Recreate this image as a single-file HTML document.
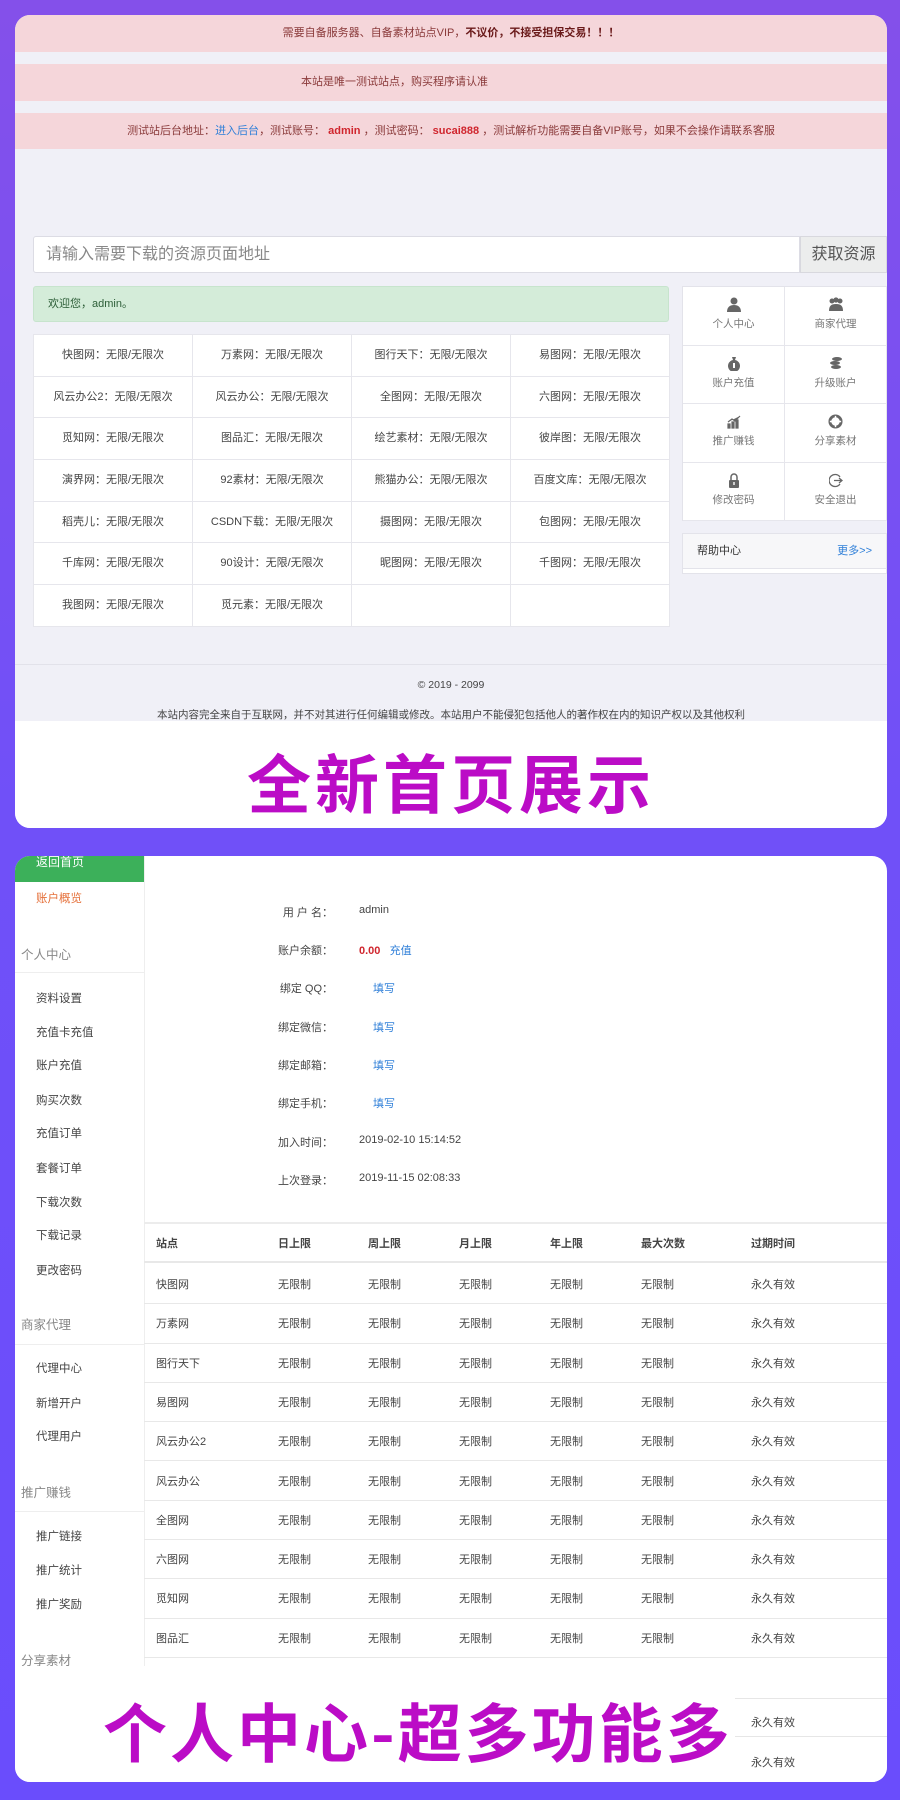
<!DOCTYPE html>
<html><head><meta charset="utf-8"><style>
*{margin:0;padding:0;box-sizing:border-box}
body{width:900px;height:1800px;overflow:hidden;background:linear-gradient(180deg,#8450ea 0%,#7050f8 45%,#6a4dfc 100%);font-family:"Liberation Sans","Noto Sans CJK SC",sans-serif;color:#333;position:relative}
.a{position:absolute}
.card{position:absolute;left:15px;width:872px;border-radius:15px;overflow:hidden;background:#fff}
.alert{position:absolute;left:0;width:872px;background:#f5d6da;color:#8a3a3a;font-size:11px;text-align:center}
.grid{position:absolute;left:18px;top:319px;width:637px;display:grid;grid-template-columns:repeat(4,159px);border-top:1px solid #e6e6ec;border-left:1px solid #e6e6ec;background:#fff}
.grid div{height:41.7px;line-height:41.7px;text-align:center;font-size:11px;border-right:1px solid #e6e6ec;border-bottom:1px solid #e6e6ec;color:#444;white-space:nowrap}
.rp{position:absolute;left:667px;top:271px;width:206px;display:grid;grid-template-columns:102px 102px;background:#fff;border-left:1px solid #e3e3ea;border-top:1px solid #e3e3ea}
.rp div{height:58.5px;border-right:1px solid #e6e6ec;border-bottom:1px solid #e6e6ec;text-align:center;font-size:10.5px;color:#777;padding-top:10px}
.rp svg{display:block;margin:0 auto 4px}
.side div{position:absolute;left:21px;font-size:11.5px;color:#444}
.side .h{left:6px;font-size:12.5px;color:#888}
.side .ln{left:0;width:129px;height:1px;background:#eee}
.lb{position:absolute;width:180px;left:138px;text-align:right;font-size:11px;color:#444}
.vl{position:absolute;left:344px;font-size:11px;color:#444}
.tr{position:absolute;left:129px;width:743px;height:39.3px;border-bottom:1px solid #e8e8e8;font-size:11px;color:#444}
.tr span{position:absolute;top:11px}
.big{position:absolute;font-weight:bold;color:#bb0cc6;font-family:"Noto Sans CJK SC","WenQuanYi Zen Hei",sans-serif;white-space:nowrap}
</style></head><body>
<div class="card" style="top:15px;height:813px;background:#f0f0f7">
 <div class="alert" style="top:0;height:37px;line-height:37px">需要自备服务器、自备素材站点VIP，<b style="color:#6a1a1a">不议价，不接受担保交易！！！</b></div>
 <div class="alert" style="top:49px;height:37px;line-height:37px;text-align:left;padding-left:286px">本站是唯一测试站点，购买程序请认准</div>
 <div class="alert" style="top:98px;height:36px;line-height:36px">测试站后台地址：<span style="color:#2f7fd8">进入后台</span>，测试账号： <b style="color:#d0262e">admin</b> ，测试密码： <b style="color:#d0262e">sucai888</b> ，测试解析功能需要自备VIP账号，如果不会操作请联系客服</div>
 <div class="a" style="left:18px;top:221px;width:767px;height:37px;background:#fff;border:1px solid #dcdce4;border-radius:3px 0 0 3px;font-size:16px;color:#888;line-height:35px;padding-left:12px">请输入需要下载的资源页面地址</div>
 <div class="a" style="left:785px;top:221px;width:87px;height:37px;background:#eceded;border:1px solid #d8d8de;font-size:16px;color:#555;line-height:35px;text-align:center">获取资源</div>
 <div class="a" style="left:18px;top:271px;width:636px;height:36px;background:#d4ecd9;border:1px solid #c7e4cd;border-radius:3px;font-size:11px;color:#2d5e38;line-height:34px;padding-left:14px">欢迎您，admin。</div>
 <div class="grid">
  <div>快图网：无限/无限次</div><div>万素网：无限/无限次</div><div>图行天下：无限/无限次</div><div>易图网：无限/无限次</div>
  <div>风云办公2：无限/无限次</div><div>风云办公：无限/无限次</div><div>全图网：无限/无限次</div><div>六图网：无限/无限次</div>
  <div>觅知网：无限/无限次</div><div>图品汇：无限/无限次</div><div>绘艺素材：无限/无限次</div><div>彼岸图：无限/无限次</div>
  <div>演界网：无限/无限次</div><div>92素材：无限/无限次</div><div>熊猫办公：无限/无限次</div><div>百度文库：无限/无限次</div>
  <div>稻壳儿：无限/无限次</div><div>CSDN下载：无限/无限次</div><div>摄图网：无限/无限次</div><div>包图网：无限/无限次</div>
  <div>千库网：无限/无限次</div><div>90设计：无限/无限次</div><div>昵图网：无限/无限次</div><div>千图网：无限/无限次</div>
  <div>我图网：无限/无限次</div><div>觅元素：无限/无限次</div><div></div><div></div>
 </div>
 <div class="rp">
  <div><svg width="14" height="15" viewBox="0 0 14 15"><circle cx="7" cy="4" r="3.5" fill="#666"/><path d="M0 15c0-5 3-7 7-7s7 2 7 7z" fill="#666"/></svg>个人中心</div>
  <div><svg width="16" height="15" viewBox="0 0 16 15"><circle cx="4" cy="4" r="2.5" fill="#666"/><circle cx="12" cy="4" r="2.5" fill="#666"/><circle cx="8" cy="3" r="2.6" fill="#666"/><path d="M1 14c0-5 2-7 7-7s7 2 7 7z" fill="#666"/></svg>商家代理</div>
  <div><svg width="12" height="15" viewBox="0 0 12 15"><path d="M4 1h4L7 4a6 6 0 1 1-2 0z" fill="#666"/><rect x="5" y="7" width="2" height="5" fill="#fff"/></svg>账户充值</div>
  <div><svg width="14" height="15" viewBox="0 0 14 15"><ellipse cx="8" cy="3" rx="5" ry="2" fill="#666"/><ellipse cx="6" cy="7" rx="5" ry="2" fill="#666"/><ellipse cx="7" cy="11" rx="5" ry="2" fill="#666"/></svg>升级账户</div>
  <div><svg width="14" height="15" viewBox="0 0 14 15"><path d="M1 14V10h2v4zM5 14V8h2v6zM9 14V6h2v8zM1 8l4-3 3 2 5-5" stroke="#666" fill="#666" stroke-width="1.2"/></svg>推广赚钱</div>
  <div><svg width="15" height="15" viewBox="0 0 16 16"><circle cx="8" cy="8" r="6" fill="none" stroke="#666" stroke-width="3"/><path d="M8 2v3M8 11v3M2 8h3M11 8h3" stroke="#fff" stroke-width="1.5"/></svg>分享素材</div>
  <div><svg width="12" height="15" viewBox="0 0 12 15"><path d="M3 7V4a3 3 0 0 1 6 0v3" stroke="#666" stroke-width="1.5" fill="none"/><rect x="1" y="7" width="10" height="8" rx="1" fill="#666"/><rect x="5.3" y="9" width="1.4" height="3" fill="#fff"/></svg>修改密码</div>
  <div><svg width="14" height="15" viewBox="0 0 14 15"><path d="M11 4a6 6 0 1 0 0 7" stroke="#666" stroke-width="1.3" fill="none"/><path d="M5 7.5h8M10 5l3 2.5-3 2.5" stroke="#666" stroke-width="1.3" fill="none"/></svg>安全退出</div>
 </div>
 <div class="a" style="left:667px;top:518px;width:205px;height:36px;background:#f7f7f9;border:1px solid #e3e3ea;font-size:11px;line-height:34px;padding-left:14px;color:#333">帮助中心<span style="position:absolute;right:14px;color:#2f7fd8">更多&gt;&gt;</span></div>
 <div class="a" style="left:667px;top:554px;width:205px;height:5px;background:#fff;border:1px solid #e3e3ea;border-top:0"></div>
 <div class="a" style="left:0;top:649px;width:872px;height:1px;background:#e2e2ea"></div>
 <div class="a" style="left:0;top:664px;width:872px;text-align:center;font-size:10.5px;color:#444">© 2019 - 2099</div>
 <div class="a" style="left:0;top:692px;width:872px;text-align:center;font-size:10.5px;color:#444">本站内容完全来自于互联网，并不对其进行任何编辑或修改。本站用户不能侵犯包括他人的著作权在内的知识产权以及其他权利</div>
 <div class="a" style="left:0;top:706px;width:872px;height:107px;background:#fff"></div>
 <div class="big" style="left:0;width:872px;text-align:center;top:728px;font-size:64px;line-height:76px;letter-spacing:4px">全新首页展示</div>
</div>

<div class="card" style="top:856px;height:926px">
 <div class="side">
  <div class="a" style="left:0;top:0;width:129px;height:26px;background:#3cb05a;color:#fff;font-size:12px;padding:0 0 0 21px;line-height:12px">返回首页</div>
  <div style="top:34px;color:#e5703a">账户概览</div>
  <div class="h" style="top:88px">个人中心</div><div class="ln" style="top:116px"></div>
  <div style="top:134px">资料设置</div><div style="top:168px">充值卡充值</div><div style="top:201px">账户充值</div><div style="top:236px">购买次数</div><div style="top:269px">充值订单</div><div style="top:304px">套餐订单</div><div style="top:338px">下载次数</div><div style="top:371px">下载记录</div><div style="top:406px">更改密码</div>
  <div class="h" style="top:458px">商家代理</div><div class="ln" style="top:488px"></div>
  <div style="top:504px">代理中心</div><div style="top:539px">新增开户</div><div style="top:572px">代理用户</div>
  <div class="h" style="top:626px">推广赚钱</div><div class="ln" style="top:655px"></div>
  <div style="top:672px">推广链接</div><div style="top:706px">推广统计</div><div style="top:740px">推广奖励</div>
  <div class="h" style="top:794px">分享素材</div>
  <div class="a" style="left:129px;top:0;width:1px;height:814px;background:#eee"></div>
 </div>
 <div class="lb" style="top:48px">用 户 名：</div><div class="vl" style="top:48px">admin</div>
 <div class="lb" style="top:86px">账户余额：</div><div class="vl" style="top:86px"><b style="color:#d0262e">0.00</b>&nbsp;&nbsp;&nbsp;<span style="color:#2f7fd8">充值</span></div>
 <div class="lb" style="top:124px">绑定 QQ：</div><div class="vl" style="top:124px;left:358px;color:#2f7fd8">填写</div>
 <div class="lb" style="top:163px">绑定微信：</div><div class="vl" style="top:163px;left:358px;color:#2f7fd8">填写</div>
 <div class="lb" style="top:201px">绑定邮箱：</div><div class="vl" style="top:201px;left:358px;color:#2f7fd8">填写</div>
 <div class="lb" style="top:239px">绑定手机：</div><div class="vl" style="top:239px;left:358px;color:#2f7fd8">填写</div>
 <div class="lb" style="top:278px">加入时间：</div><div class="vl" style="top:278px">2019-02-10 15:14:52</div>
 <div class="lb" style="top:316px">上次登录：</div><div class="vl" style="top:316px">2019-11-15 02:08:33</div>
 <div class="a" style="left:129px;top:366px;width:743px;height:2px;background:#ececec"></div>
 <div class="tr" style="top:368px;font-weight:bold;border-bottom:2px solid #e8e8e8"><span style="left:12px">站点</span><span style="left:134px">日上限</span><span style="left:224px">周上限</span><span style="left:315px">月上限</span><span style="left:406px">年上限</span><span style="left:497px">最大次数</span><span style="left:607px">过期时间</span></div>
 <div id="rows"></div>
 <div class="a" style="left:0;top:810px;width:872px;height:116px;background:#fff"></div>
 <div class="a" style="left:720px;top:842px;width:152px;height:1px;background:#e6e6e6"></div>
 <div class="a" style="left:736px;top:858px;font-size:11px;color:#444">永久有效</div>
 <div class="a" style="left:720px;top:880px;width:152px;height:1px;background:#e6e6e6"></div>
 <div class="a" style="left:736px;top:898px;font-size:11px;color:#444">永久有效</div>
 <div class="big" style="left:88px;top:836px;font-size:64px;line-height:76px;letter-spacing:3px">个人中心-超多功能多</div>
</div>
<script>
var n=["快图网","万素网","图行天下","易图网","风云办公2","风云办公","全图网","六图网","觅知网","图品汇"],h="";
for(var i=0;i<n.length;i++){h+='<div class="tr" style="top:'+(409+i*39.3)+'px"><span style="left:12px">'+n[i]+'</span>';
[134,224,315,406,497].forEach(function(x){h+='<span style="left:'+x+'px">无限制</span>'});h+='<span style="left:607px">永久有效</span></div>';}
document.getElementById('rows').outerHTML=h;
</script>
</body></html>
